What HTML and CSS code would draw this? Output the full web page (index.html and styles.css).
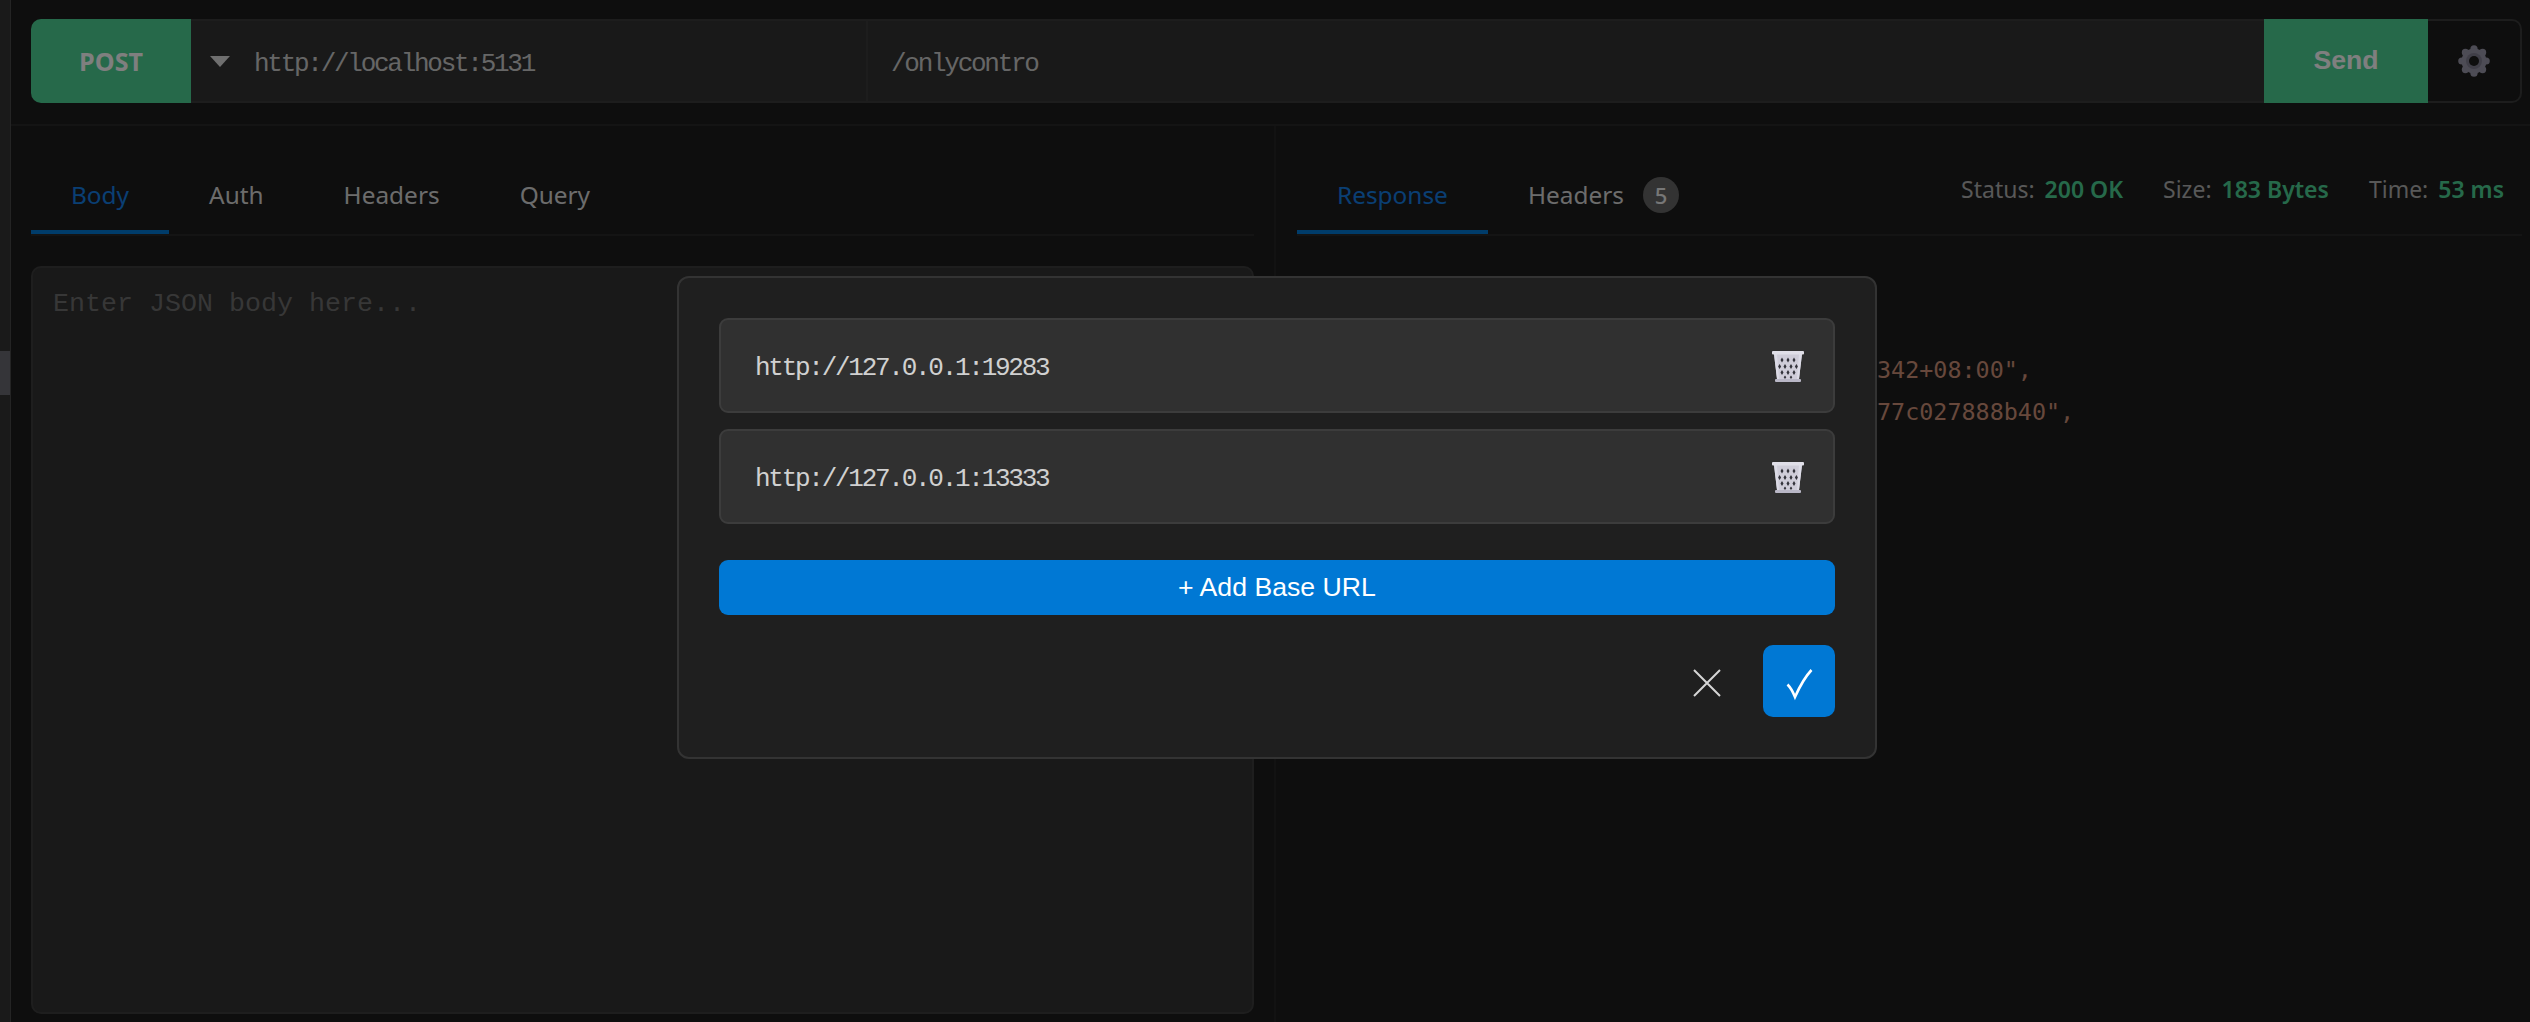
FILE: index.html
```html
<!DOCTYPE html>
<html lang="en">
<head>
<meta charset="utf-8">
<title>Request</title>
<link rel="stylesheet" href="styles.css">
</head>
<body>
<div class="app">
  <aside class="rail"><div class="thumb"></div></aside>
  <main class="main">
    <header class="topbar">
      <div class="bar">
        <button class="method">POST</button>
        <div class="base">
          <span class="caret"></span>
          <span class="mono">http://localhost:5131</span>
        </div>
        <div class="path"><span class="mono">/onlycontro</span></div>
        <button class="send">Send</button>
        <button class="settings">
          <svg class="gear" viewBox="0 0 32 32">
            <g class="gear-teeth">
              <circle cx="16" cy="3.800" r="3.600"/>
              <circle cx="24.600" cy="7.400" r="3.600"/>
              <circle cx="28.200" cy="16" r="3.600"/>
              <circle cx="24.600" cy="24.600" r="3.600"/>
              <circle cx="16" cy="28.200" r="3.600"/>
              <circle cx="7.400" cy="24.600" r="3.600"/>
              <circle cx="3.800" cy="16" r="3.600"/>
              <circle cx="7.400" cy="7.400" r="3.600"/>
              <circle cx="16" cy="16" r="12.500"/>
            </g>
            <circle class="gear-ring" cx="16" cy="16" r="8"/>
            <circle class="gear-hole" cx="16" cy="16" r="5"/>
          </svg>
        </button>
      </div>
    </header>
    <div class="panes">
      <section class="pane pane-left">
        <nav class="tabs">
          <span class="tab active">Body</span>
          <span class="tab">Auth</span>
          <span class="tab">Headers</span>
          <span class="tab">Query</span>
        </nav>
        <div class="editor"><span class="placeholder">Enter JSON body here...</span></div>
      </section>
      <section class="pane pane-right">
        <nav class="tabs">
          <span class="tab active">Response</span>
          <span class="tab tab-badge">Headers<span class="badge">5</span></span>
          <div class="stats">
            <span class="stat">Status:<b>200 OK</b></span>
            <span class="stat">Size:<b>183 Bytes</b></span>
            <span class="stat">Time:<b>53 ms</b></span>
          </div>
        </nav>
        <pre class="json">342+08:00",
77c027888b40",</pre>
      </section>
    </div>
  </main>
</div>

<div class="overlay">
  <div class="modal">
    <div class="url-item">
      <span class="mono">http://127.0.0.1:19283</span>
      <svg class="trash" viewBox="0 0 32 31">
        <path class="trash-body" d="M2 3h28l-3 25H5z"/>
        <path class="trash-side" d="M2 3h3l2 25H5zM30 3h-3l-2 25h2z"/>
        <g class="trash-holes">
          <path d="M10 6.500l1.500 2.500-1.500 2.500-1.500-2.500zM16 6.500l1.500 2.500-1.500 2.500-1.500-2.500zM22 6.500l1.500 2.500-1.500 2.500-1.500-2.500zM7.600 13l1.500 2.500-1.500 2.500-1.500-2.500zM13 13l1.500 2.500-1.500 2.500-1.500-2.500zM19 13l1.500 2.500-1.500 2.500-1.500-2.500zM24.400 13l1.500 2.500-1.500 2.500-1.500-2.500zM10 19l1.500 2.500-1.500 2.500-1.500-2.500zM16 19l1.500 2.500-1.500 2.500-1.500-2.500zM22 19l1.500 2.500-1.500 2.500-1.500-2.500zM13 24.500l1.300 1.800-1.300 1.700-1.300-1.700zM19 24.500l1.300 1.800-1.300 1.700-1.300-1.700z"/>
        </g>
        <rect class="trash-rim" x="0" y="0" width="32" height="3.600" rx="1"/>
        <rect class="trash-base" x="3" y="28" width="26" height="3" rx="1"/>
      </svg>
    </div>
    <div class="url-item">
      <span class="mono">http://127.0.0.1:13333</span>
      <svg class="trash" viewBox="0 0 32 31">
        <path class="trash-body" d="M2 3h28l-3 25H5z"/>
        <path class="trash-side" d="M2 3h3l2 25H5zM30 3h-3l-2 25h2z"/>
        <g class="trash-holes">
          <path d="M10 6.500l1.500 2.500-1.500 2.500-1.500-2.500zM16 6.500l1.500 2.500-1.500 2.500-1.500-2.500zM22 6.500l1.500 2.500-1.500 2.500-1.500-2.500zM7.600 13l1.500 2.500-1.500 2.500-1.500-2.500zM13 13l1.500 2.500-1.500 2.500-1.500-2.500zM19 13l1.500 2.500-1.500 2.500-1.500-2.500zM24.400 13l1.500 2.500-1.500 2.500-1.500-2.500zM10 19l1.500 2.500-1.500 2.500-1.500-2.500zM16 19l1.500 2.500-1.500 2.500-1.500-2.500zM22 19l1.500 2.500-1.500 2.500-1.500-2.500zM13 24.500l1.300 1.800-1.300 1.700-1.300-1.700zM19 24.500l1.300 1.800-1.300 1.700-1.300-1.700z"/>
        </g>
        <rect class="trash-rim" x="0" y="0" width="32" height="3.600" rx="1"/>
        <rect class="trash-base" x="3" y="28" width="26" height="3" rx="1"/>
      </svg>
    </div>
    <button class="add">+ Add Base URL</button>
    <div class="actions">
      <button class="close">
        <svg class="x-icon" viewBox="0 0 28 28"><path d="M1 1l26 26M27 1L1 27"/></svg>
      </button>
      <button class="ok">
        <svg class="check-icon" viewBox="0 0 72 72"><path d="M24.500 39.500c3 3 5.500 7.500 7.500 12.500C36 43 41 33 48.500 25"/></svg>
      </button>
    </div>
  </div>
</div>
</body>
</html>
```

FILE: styles.css
```css
* { box-sizing: border-box; }
html, body { height: 100%; }
body {
  margin: 0;
  background: #1c1c1c;
  color: #dedede;
  font-family: "Noto Sans", sans-serif;
  overflow: hidden;
}
button { border: 0; padding: 0; font: inherit; }

.app { display: flex; height: 1022px; }
.rail {
  flex: 0 0 11px;
  background: #343434;
  border-right: 1px solid #484848;
  padding-top: 351px;
}
.thumb { width: 10px; height: 44px; background: #6a6a72; }
.main { flex: 1; display: flex; flex-direction: column; min-width: 0; }

.topbar {
  height: 126px;
  padding: 19px 8px 0 20px;
  border-bottom: 2px solid #282828;
  flex: none;
}
.bar {
  display: flex;
  height: 84px;
  border-radius: 8px;
}
.mono {
  font-family: "Liberation Mono", monospace;
  font-size: 26px;
  letter-spacing: -2.27px;
  padding-top: 5px;
}
.method {
  flex: 0 0 160px;
  background: #4cd294;
  color: #fff;
  font-family: "Open Sans", sans-serif;
  font-weight: 700;
  font-size: 25px;
  border-radius: 10px 0 0 10px;
}
.base {
  flex: 0 0 675px;
  display: flex;
  align-items: center;
  gap: 24px;
  padding-left: 19px;
  background: #323232;
  border: solid #3a3a3a;
  border-width: 2px 0;
  color: #cdcdcd;
}
.caret {
  width: 0;
  height: 0;
  border-left: 10px solid transparent;
  border-right: 10px solid transparent;
  border-top: 11px solid #dedede;
}
.path {
  flex: 1;
  display: flex;
  align-items: center;
  padding-left: 23px;
  background: #323232;
  border: solid #3a3a3a;
  border-width: 2px 0 2px 2px;
  color: #cdcdcd;
}
.send {
  flex: 0 0 164px;
  background: #4cd294;
  color: #fff;
  font-family: "Liberation Sans", sans-serif;
  font-weight: 700;
  font-size: 26.67px;
  padding-bottom: 2px;
}
.settings {
  flex: 0 0 94px;
  display: flex;
  align-items: center;
  justify-content: center;
  background: transparent;
  border: solid #3a3a3a;
  border-width: 2px 2px 2px 0;
  border-radius: 0 10px 10px 0;
  padding-bottom: 1px;
}
.gear { width: 32px; height: 32px; }
.gear-teeth { fill: #9a98aa; }
.gear-ring { fill: #807e90; }
.gear-hole { fill: #1c1c1c; }

.panes { flex: 1; display: flex; min-height: 0; }
.pane { display: flex; flex-direction: column; }
.pane-left {
  flex: 0 0 1265px;
  padding: 0 20px 8px 20px;
  border-right: 2px solid #242424;
}
.pane-right { flex: 1; padding: 0 8px 0 21px; min-width: 0; }

.tabs {
  display: flex;
  align-items: flex-end;
  height: 110px;
  border-bottom: 2px solid #282828;
  flex: none;
}
.tab {
  display: flex;
  align-items: center;
  height: 58px;
  padding: 0 40px 17px;
  font-size: 24.4px;
  line-height: 36px;
  color: #d8d8d8;
  border-bottom: 4px solid transparent;
}
.tab.active { color: #147ee6; border-bottom-color: #0078d4; }
.tab-badge { padding-right: 0; }
.badge {
  width: 36px;
  height: 36px;
  margin-left: 19px;
  border-radius: 50%;
  background: #666;
  color: #eee;
  display: flex;
  align-items: center;
  justify-content: center;
  font-size: 22px;
  font-weight: 500;
}
.stats {
  margin-left: auto;
  align-self: flex-start;
  display: flex;
  gap: 40px;
  padding: 47px 18px 0 0;
  font-size: 23px;
  line-height: 32px;
  color: #b0b0b0;
}
.stat b { font-weight: 600; color: #4cd294; margin-left: 10px; }

.editor {
  flex: 1;
  margin-top: 30px;
  padding: 20px 20px;
  background: #323232;
  border: 2px solid #3c3c3c;
  border-radius: 10px;
}
.placeholder {
  font-family: "Liberation Mono", monospace;
  font-size: 26.67px;
  line-height: 32px;
  color: #6e6e6e;
}
.json {
  margin: 114px 0 0;
  padding-left: 580px;
  font-family: "DejaVu Sans Mono", monospace;
  font-size: 23.4px;
  line-height: 41.5px;
  color: #ce9178;
}

.overlay {
  position: fixed;
  inset: 0;
  display: flex;
  align-items: flex-start;
  padding: 276px 0 0 677px;
  background: rgba(0, 0, 0, .5);
}
.modal {
  width: 1200px;
  height: 483px;
  padding: 40px 40px;
  background: #1f1f1f;
  border: 2px solid #333;
  border-radius: 12px;
  display: flex;
  flex-direction: column;
}
.url-item {
  display: flex;
  align-items: center;
  justify-content: space-between;
  height: 95px;
  margin-bottom: 16px;
  padding: 0 29px 0 34px;
  background: #303030;
  border: 2px solid #3c3c3c;
  border-radius: 9px;
  color: #d0d0d0;
  flex: none;
}
.trash { width: 32px; height: 31px; flex: none; margin-top: 2px; }
.trash-body { fill: #cfcdd9; }
.trash-side { fill: #dcdbe6; }
.trash-holes { fill: #33333b; }
.trash-rim { fill: #e0dfe8; }
.trash-base { fill: #b9b7c6; }
.add {
  height: 55px;
  margin-top: 20px;
  background: #0078d4;
  color: #fff;
  font-family: "Liberation Sans", sans-serif;
  font-size: 26.67px;
  border-radius: 9px;
  flex: none;
}
.actions {
  display: flex;
  justify-content: flex-end;
  gap: 20px;
  margin-top: 30px;
}
.close, .ok {
  width: 72px;
  height: 72px;
  border-radius: 10px;
  display: flex;
  align-items: center;
  justify-content: center;
}
.close { background: transparent; margin-top: 4px; height: 68px; }
.ok { background: #0078d4; }
.x-icon { width: 28px; height: 28px; fill: none; stroke: #d6d6d6; stroke-width: 2; }
.check-icon { width: 72px; height: 72px; fill: none; stroke: #fff; stroke-width: 2.6; }
```
